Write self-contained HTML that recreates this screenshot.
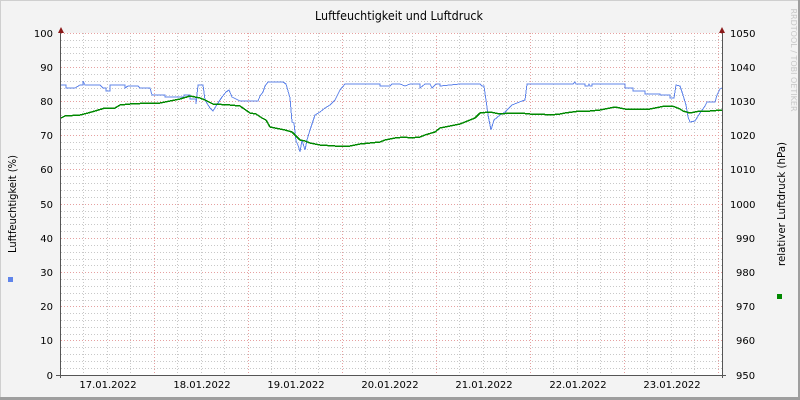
<!DOCTYPE html><html><head><meta charset="utf-8"><style>
html,body{margin:0;padding:0;width:800px;height:400px;overflow:hidden;background:#f3f3f3}
svg{display:block;font-family:"DejaVu Sans","Liberation Sans",sans-serif}
</style></head><body>
<svg width="800" height="400" viewBox="0 0 800 400" xmlns="http://www.w3.org/2000/svg">
<rect x="0" y="0" width="800" height="400" fill="#f3f3f3"/>
<rect x="0" y="0" width="800" height="1" fill="#cfcfcf"/>
<rect x="0" y="0" width="1" height="400" fill="#cfcfcf"/>
<rect x="798" y="0" width="2" height="400" fill="#9e9e9e"/>
<rect x="0" y="397" width="800" height="3" fill="#9e9e9e"/>
<rect x="61" y="33" width="662" height="342" fill="#ffffff"/>
<g id="grid" stroke-width="1" fill="none">
<g stroke="#c8c8c8" stroke-dasharray="1,2">
<path d="M61 368.5H723M61 361.5H723M61 354.5H723M61 347.5H723M61 334.5H723M61 327.5H723M61 320.5H723M61 313.5H723M61 300.5H723M61 293.5H723M61 286.5H723M61 279.5H723M61 265.5H723M61 259.5H723M61 252.5H723M61 245.5H723M61 231.5H723M61 224.5H723M61 217.5H723M61 211.5H723M61 197.5H723M61 190.5H723M61 183.5H723M61 176.5H723M61 163.5H723M61 156.5H723M61 149.5H723M61 142.5H723M61 129.5H723M61 122.5H723M61 115.5H723M61 108.5H723M61 95.5H723M61 88.5H723M61 81.5H723M61 74.5H723M61 60.5H723M61 53.5H723M61 47.5H723M61 40.5H723"/>
<path d="M83.5 33V375M107.5 33V375M130.5 33V375M177.5 33V375M201.5 33V375M224.5 33V375M271.5 33V375M295.5 33V375M318.5 33V375M365.5 33V375M389.5 33V375M412.5 33V375M459.5 33V375M483.5 33V375M506.5 33V375M553.5 33V375M577.5 33V375M600.5 33V375M647.5 33V375M671.5 33V375M694.5 33V375"/>
</g>
<g stroke="#e6a0a0" stroke-dasharray="1,2">
<path d="M61 340.5H723M61 306.5H723M61 272.5H723M61 238.5H723M61 204.5H723M61 169.5H723M61 135.5H723M61 101.5H723M61 67.5H723M61 33.5H723"/>
<path d="M154.5 33V375M248.5 33V375M342.5 33V375M436.5 33V375M530.5 33V375M624.5 33V375M718.5 33V375"/>
</g>
</g>
<polyline fill="none" stroke="#5f84ea" stroke-width="1" shape-rendering="crispEdges" points="61,85 66,85 66,88 75,88 80,85 83,85 83,81 85,85 100,85 103,88 106,88 106,91 110,91 110,85 125,85 125,88 128,86 138,86 140,88 150,88 152,95 165,95 165,97 184,97 184,95 190,95 190,99 196,99 196,104 198,85 203,85 205,100 210,108 213,111 218,103 222,97 226,92 229,90 232,97 240,101 258,101 260,96 263,92 265,86 268,82 283,82 286,84 290,98 292,122 294,123 296,141 298,145 300,152 302,140 305,150 307,140 310,130 315,115 320,112 325,108 330,105 335,100 340,90 345,84 380,84 380,86 390,86 392,84 400,84 405,86 410,84 420,84 420,88 425,84 430,84 432,88 436,84 440,84 440,86 460,84 480,84 482,86 484,86 486,100 488,115 491,130 494,120 500,115 505,112 512,105 517,103 522,101 525,100 527,84 545,84 550,84 573,84 575,82 576,84 585,84 585,86 588,86 589,84 590,86 592,86 592,84 625,84 625,88 633,88 633,91 645,91 645,94 660,94 660,95 670,95 670,98 674,98 676,85 680,86 683,95 686,105 688,117 690,122 695,121 700,113 705,106 707,102 715,102 717,95 720,89 722,88"/>
<polyline fill="none" stroke="#008800" stroke-width="1.5" shape-rendering="crispEdges" points="61,118 65,116 80,115 88,113 95,111 105,108 115,108 120,105 130,104 150,103 160,103 170,101 180,99 190,96 200,98 205,100 213,104 230,105 240,106 250,113 256,114 262,118 266,120 270,127 285,130 292,132 295,135 300,140 305,141 310,143 320,145 335,146 350,146 355,145 360,144 370,143 380,142 385,140 395,138 405,137 410,138 420,137 425,135 435,132 440,128 450,126 460,124 465,122 470,120 475,118 480,113 490,112 495,113 500,114 510,113 520,113 530,114 540,114 550,115 560,114 565,113 580,111 590,111 600,110 610,108 615,107 625,109 640,109 650,109 660,107 665,106 672,106 675,107 680,109 683,111 690,113 700,111 710,111 722,110"/>
<rect x="60" y="33" width="1" height="345" fill="#555"/>
<rect x="722" y="33" width="1" height="345" fill="#555"/>
<rect x="56" y="375" width="670" height="1" fill="#555"/>
<polygon points="58,33 64,33 61,27" fill="#8b1a1a"/>
<polygon points="719,33 725,33 722,27" fill="#8b1a1a"/>
<g font-size="10" fill="#000" text-anchor="end">
<text x="53" y="37">100</text><text x="53" y="71">90</text><text x="53" y="105">80</text><text x="53" y="139">70</text><text x="53" y="173">60</text><text x="53" y="208">50</text><text x="53" y="242">40</text><text x="53" y="276">30</text><text x="53" y="310">20</text><text x="53" y="344">10</text><text x="53" y="379">0</text>
</g>
<g font-size="10" fill="#000" text-anchor="start">
<text x="730" y="37">1050</text><text x="730" y="71">1040</text><text x="730" y="105">1030</text><text x="730" y="139">1020</text><text x="730" y="173">1010</text><text x="730" y="208">1000</text><text x="736" y="242">990</text><text x="736" y="276">980</text><text x="736" y="310">970</text><text x="736" y="344">960</text><text x="736" y="379">950</text>
</g>
<g font-size="10" fill="#000" text-anchor="middle">
<text x="108" y="388">17.01.2022</text><text x="202" y="388">18.01.2022</text><text x="296" y="388">19.01.2022</text><text x="390" y="388">20.01.2022</text><text x="484" y="388">21.01.2022</text><text x="578" y="388">22.01.2022</text><text x="672" y="388">23.01.2022</text>
</g>
<text x="315" y="20" font-size="12" fill="#000" textLength="168" lengthAdjust="spacingAndGlyphs">Luftfeuchtigkeit und Luftdruck</text>
<text transform="translate(16,204) rotate(-90)" font-size="11" text-anchor="middle" fill="#000" textLength="98" lengthAdjust="spacingAndGlyphs">Luftfeuchtigkeit (%)</text>
<text transform="translate(785,204) rotate(-90)" font-size="11" text-anchor="middle" fill="#000" textLength="124" lengthAdjust="spacingAndGlyphs">relativer Luftdruck (hPa)</text>
<text transform="translate(791,60) rotate(90)" font-size="8" text-anchor="middle" fill="#c8c8c8">RRDTOOL / TOBI OETIKER</text>
<rect x="8" y="277" width="5" height="5" fill="#5f84ea"/>
<rect x="777" y="294" width="5" height="5" fill="#008800"/>
</svg>
</body></html>
